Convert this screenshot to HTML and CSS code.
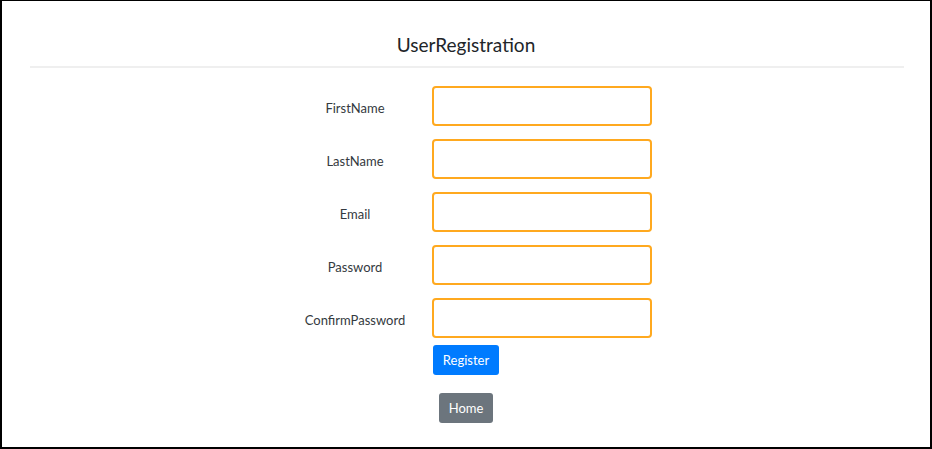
FILE: index.html
```html
<!DOCTYPE html>
<html lang="en">
<head>
<meta charset="utf-8">
<title>UserRegistration</title>
<link rel="stylesheet" href="styles.css">
</head>
<body>
<div class="frame">
  <h1 class="title">UserRegistration</h1>
  <hr class="rule">
  <form class="form">
    <div class="row"><label class="label">FirstName</label><input class="field" type="text"></div>
    <div class="row"><label class="label">LastName</label><input class="field" type="text"></div>
    <div class="row"><label class="label">Email</label><input class="field" type="text"></div>
    <div class="row"><label class="label">Password</label><input class="field" type="password"></div>
    <div class="row"><label class="label">ConfirmPassword</label><input class="field" type="password"></div>
    <button class="btn btn-primary" type="button">Register</button>
    <button class="btn btn-secondary" type="button">Home</button>
  </form>
</div>
</body>
</html>
```
FILE: styles.css
```css
html, body {
  margin: 0;
  padding: 0;
  background: #fff;
}
body {
  font-family: Lato, "Liberation Sans", sans-serif;
  color: #212529;
}
.frame {
  box-sizing: border-box;
  height: 449px;
  width: 932px;
  border-style: solid;
  border-color: #000;
  border-width: 1px 2px 2px 2px;
  background: #fff;
}
.title {
  margin: 0;
  padding-top: 32px;
  font-size: 19px;
  line-height: 24px;
  font-weight: 400;
  text-align: center;
  color: #212529;
}
.rule {
  margin: 9px 26px 0 28px;
  border: 0;
  height: 2px;
  background: #efefef;
}
.form {
  margin-top: 18px;
  display: flex;
  flex-direction: column;
  align-items: center;
}
.row {
  width: 372px;
  display: flex;
  align-items: center;
  gap: 2px;
  margin-bottom: 13px;
}
.row:nth-child(5) {
  margin-bottom: 7px;
}
.label {
  width: 150px;
  padding-top: 3px;
  text-align: center;
  font-size: 13px;
  color: #343a40;
}
.field {
  box-sizing: border-box;
  width: 220px;
  height: 40px;
  border: 2px solid #ffa91f;
  border-radius: 4px;
  background: #fff;
  outline: none;
  padding: 0 8px;
  font: inherit;
}
.btn {
  box-sizing: border-box;
  height: 30px;
  padding: 0 10px;
  border: 0;
  border-radius: 3px;
  font-family: inherit;
  font-size: 13px;
  color: #fff;
  line-height: 30px;
}
.btn-primary {
  background: #007bff;
  margin-bottom: 18px;
}
.btn-secondary {
  background: #6c757d;
}
```
